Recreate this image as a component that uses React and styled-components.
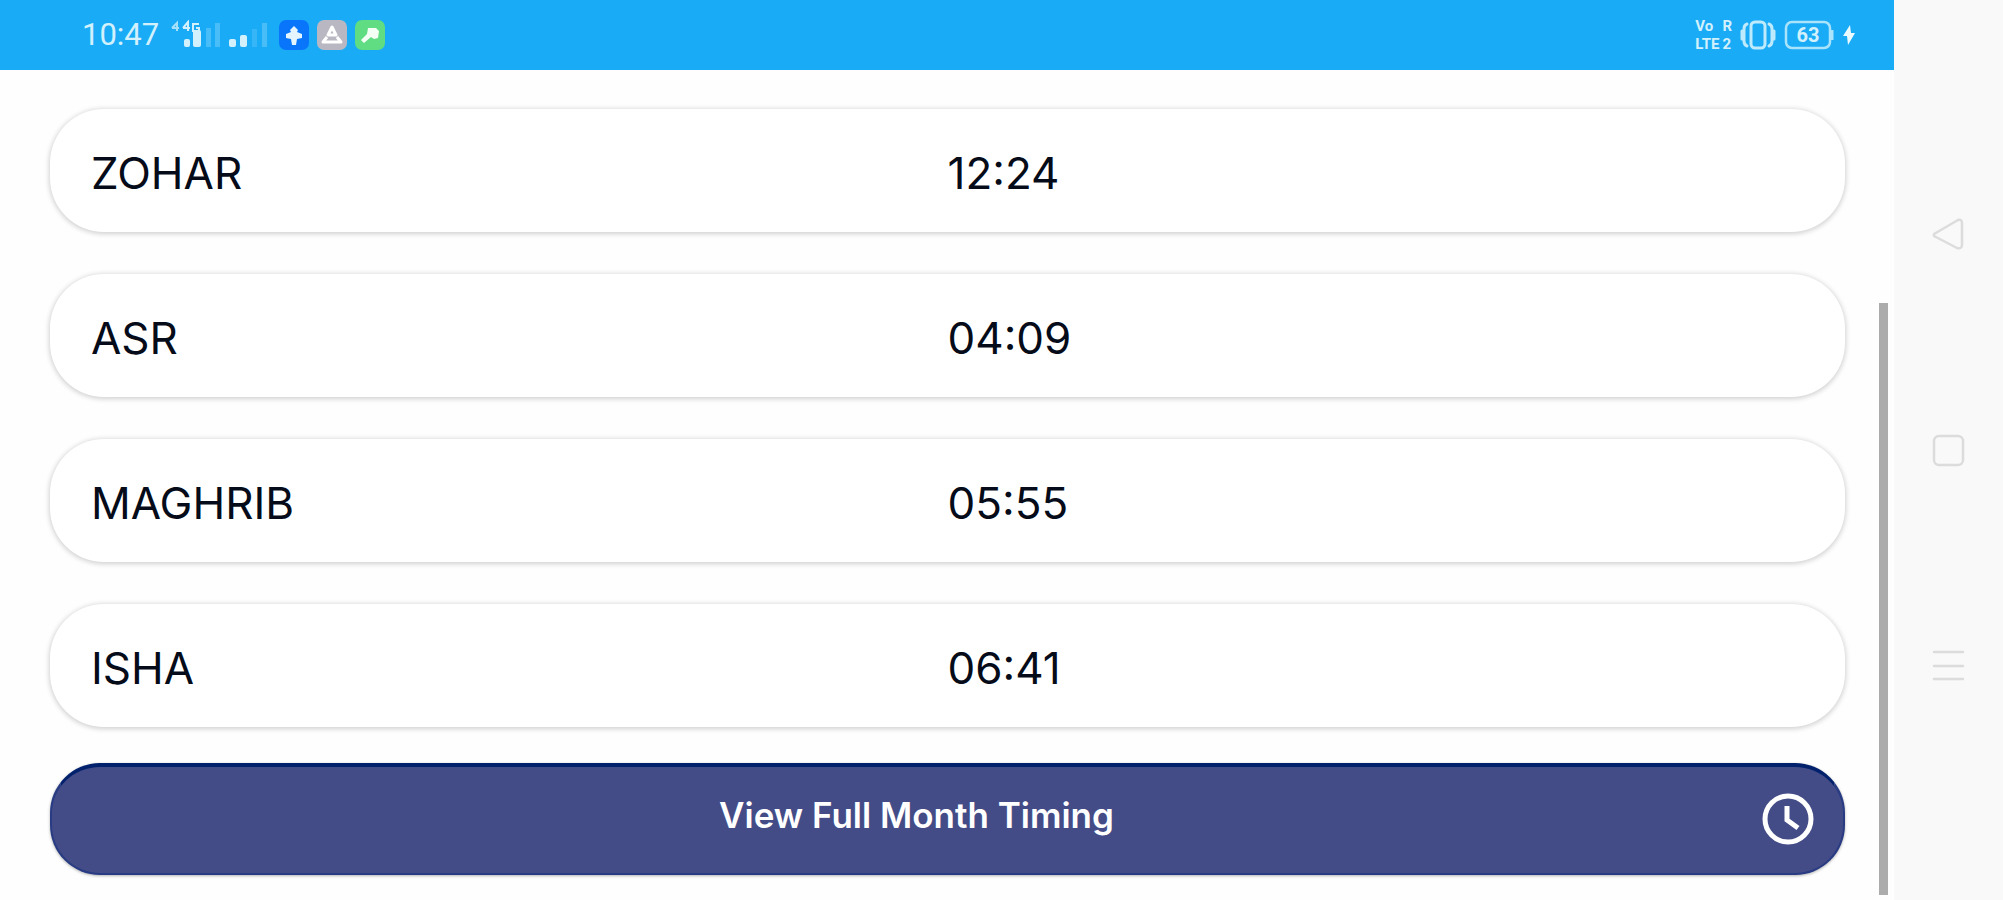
import React from "react";
import styled, { createGlobalStyle } from "styled-components";

const prayers = [
  { name: "ZOHAR", time: "12:24" },
  { name: "ASR", time: "04:09" },
  { name: "MAGHRIB", time: "05:55" },
  { name: "ISHA", time: "06:41" },
];

const GlobalStyle = createGlobalStyle`
  * {
    box-sizing: border-box;
  }

  body {
    margin: 0;
    background-color: #fefefe;
    font-family: Inter, "Liberation Sans", sans-serif;
  }
`;

const Screen = styled.div`
  display: flex;
  min-height: 100vh;
`;

const AppArea = styled.div`
  flex: 1;
  display: flex;
  flex-direction: column;
`;

const StatusBar = styled.header`
  display: flex;
  align-items: center;
  justify-content: space-between;
  height: 70px;
  padding: 0 38px 0 82px;
  background-color: #1aabf6;
  color: #d3f1fd;
`;

const StatusGroup = styled.div`
  display: flex;
  align-items: center;
  gap: ${(props) => props.$gap}px;
`;

const Clock = styled.time`
  font-family: Roboto, sans-serif;
  font-size: 31px;
  line-height: 36px;
`;

const Badge = styled.span`
  display: flex;
  width: 30px;
  height: 30px;
  border-radius: 7px;
  background-color: ${(props) => props.$color};
`;

const Volte = styled.span`
  display: grid;
  grid-template-columns: auto auto;
  column-gap: 3px;
  font-family: Roboto, sans-serif;
  font-size: 15px;
  font-weight: 700;
  line-height: 18px;
`;

const Content = styled.main`
  flex: 1;
  display: flex;
  padding-right: 6px;
`;

const Timings = styled.section`
  flex: 1;
  padding: 39px 34px 24px 50px;
`;

const PrayerList = styled.ul`
  display: grid;
  gap: 42px;
  margin: 0 0 36px;
  padding: 0;
  list-style: none;
`;

const PrayerCard = styled.li`
  display: grid;
  grid-template-columns: 1fr 1fr;
  align-items: center;
  height: 123px;
  padding-top: 4px;
  border-radius: 54px;
  background-color: #fff;
  box-shadow: 0 1px 5px 1px rgba(0, 0, 0, 0.18);
  color: #050b18;
  font-size: 44px;
  line-height: 56px;
`;

const PrayerName = styled.span`
  padding-left: 41px;
`;

const MonthButton = styled.button`
  display: grid;
  grid-template-columns: 1fr 54px;
  align-items: center;
  width: 100%;
  height: 112px;
  padding: 0 28px 0 20px;
  border: 2px solid #283b83;
  border-top: 4px solid #02216d;
  border-radius: 50px;
  background-color: #434c87;
  box-shadow: 0 1px 3px rgba(0, 0, 0, 0.3);
  color: #fff;
  font-family: inherit;
  font-size: 35px;
  font-weight: 600;
  line-height: 44px;
  cursor: pointer;
`;

const ButtonLabel = styled.span`
  padding-bottom: 10px;
`;

const ScrollTrack = styled.div`
  display: flex;
  width: 9px;
  padding: 233px 0 5px;
`;

const ScrollThumb = styled.div`
  flex: 1;
  background-color: #acacac;
`;

const NavBar = styled.nav`
  display: flex;
  flex-direction: column;
  align-items: center;
  justify-content: center;
  gap: 180px;
  width: 109px;
  background-color: #f9f9f9;
`;

const NavButton = styled.button`
  display: flex;
  padding: 0;
  border: 0;
  background: none;
  cursor: pointer;
`;

const NavIcon = ({ children }) => (
  <svg width="36" height="36" fill="none" stroke="#dcdcdc" strokeWidth="2.5" strokeLinejoin="round" strokeLinecap="round">
    {children}
  </svg>
);

const SignalIcons = () => (
  <svg width="100" height="30" fill="#d3f1fd">
    <path d="M1 8l5-5v8M1 8h7" fill="none" stroke="#a6e1fb" strokeWidth="2" />
    <path d="M12 8l5-6v9M12 8h7M28 4h-6v7h6V8h-3" fill="none" stroke="#d3f1fd" strokeWidth="2" />
    <rect x="13" y="19" width="6" height="8" rx="2" />
    <rect x="22" y="10" width="8" height="17" rx="2" />
    <rect x="35" y="8" width="5" height="19" fill="#49bdf8" />
    <rect x="44" y="3" width="5" height="24" fill="#49bdf8" />
    <rect x="58" y="19" width="7" height="8" rx="2" />
    <rect x="69" y="15" width="7" height="12" rx="2" />
    <rect x="81" y="9" width="5" height="18" fill="#36b6f7" />
    <rect x="91" y="3" width="5" height="24" fill="#49bdf8" />
  </svg>
);

const VibrateIcon = () => (
  <svg width="36" height="30" fill="none" stroke="#bdeafc" strokeWidth="3" strokeLinecap="round">
    <rect x="11" y="2" width="14" height="26" rx="4" />
    <path d="M7 4q-3 1-3 5v12q0 4 3 5M29 4q3 1 3 5v12q0 4-3 5M2 11v8M34 11v8" />
  </svg>
);

const BatteryIcon = () => (
  <svg width="50" height="30">
    <rect x="2" y="2" width="44" height="26" rx="6" fill="none" stroke="#a9e3fc" strokeWidth="2.5" />
    <path d="M48 10v10" stroke="#a9e3fc" strokeWidth="3" />
    <text x="24" y="22" textAnchor="middle" fill="#d3f1fd" fontFamily="Roboto, sans-serif" fontSize="20" fontWeight="700">63</text>
  </svg>
);

const BoltIcon = () => (
  <svg width="14" height="22" fill="#eafaff">
    <path d="M8 1L1 12h4l1 9 7-12H9z" />
  </svg>
);

const ClockIcon = () => (
  <svg width="54" height="54" fill="none" stroke="#fff">
    <circle cx="27" cy="26" r="23" strokeWidth="5" />
    <path d="M26 13v14l11 8" strokeWidth="5" />
  </svg>
);

const App = () => (
  <>
    <GlobalStyle />
    <Screen>
      <AppArea>
        <StatusBar>
          <StatusGroup $gap={12}>
            <Clock>10:47</Clock>
            <StatusGroup $gap={8}>
              <SignalIcons />
              <Badge $color="#0875fb">
                <svg width="30" height="30" fill="#e5f5ff">
                  <path d="M15 6l4 4-1 2 5 2v4l-5 1-1 6h-4l-1-6-5-1v-4l5-2-1-2z" />
                </svg>
              </Badge>
              <Badge $color="#b9b8c2">
                <svg width="30" height="30" fill="none" stroke="#fff" strokeWidth="3" strokeLinejoin="round">
                  <path d="M15 7l-4 8h8zM10 17l-4 5h18l-4-5" />
                </svg>
              </Badge>
              <Badge $color="#60dc83">
                <svg width="30" height="30" fill="#f3fff5">
                  <path d="M13 8h8l3 3-1 7-4 1-3-2-7 6-3-3 6-6z" />
                </svg>
              </Badge>
            </StatusGroup>
          </StatusGroup>
          <StatusGroup $gap={8}>
            <Volte>
              <span>Vo</span>
              <span>R</span>
              <span>LTE</span>
              <span>2</span>
            </Volte>
            <VibrateIcon />
            <BatteryIcon />
            <BoltIcon />
          </StatusGroup>
        </StatusBar>
        <Content>
          <Timings>
            <PrayerList>
              {prayers.map((prayer) => (
                <PrayerCard key={prayer.name}>
                  <PrayerName>{prayer.name}</PrayerName>
                  <time>{prayer.time}</time>
                </PrayerCard>
              ))}
            </PrayerList>
            <MonthButton type="button">
              <ButtonLabel>View Full Month Timing</ButtonLabel>
              <ClockIcon />
            </MonthButton>
          </Timings>
          <ScrollTrack>
            <ScrollThumb />
          </ScrollTrack>
        </Content>
      </AppArea>
      <NavBar>
        <NavButton type="button" aria-label="Back">
          <NavIcon>
            <path d="M3 18L27 4q4-1 4 3v22q0 4-5 3L3 20z" />
          </NavIcon>
        </NavButton>
        <NavButton type="button" aria-label="Home">
          <NavIcon>
            <rect x="3" y="4" width="29" height="29" rx="5" />
          </NavIcon>
        </NavButton>
        <NavButton type="button" aria-label="Recent apps">
          <NavIcon>
            <path d="M3 4h29M3 18h29M3 31h29" />
          </NavIcon>
        </NavButton>
      </NavBar>
    </Screen>
  </>
);

export default App;
